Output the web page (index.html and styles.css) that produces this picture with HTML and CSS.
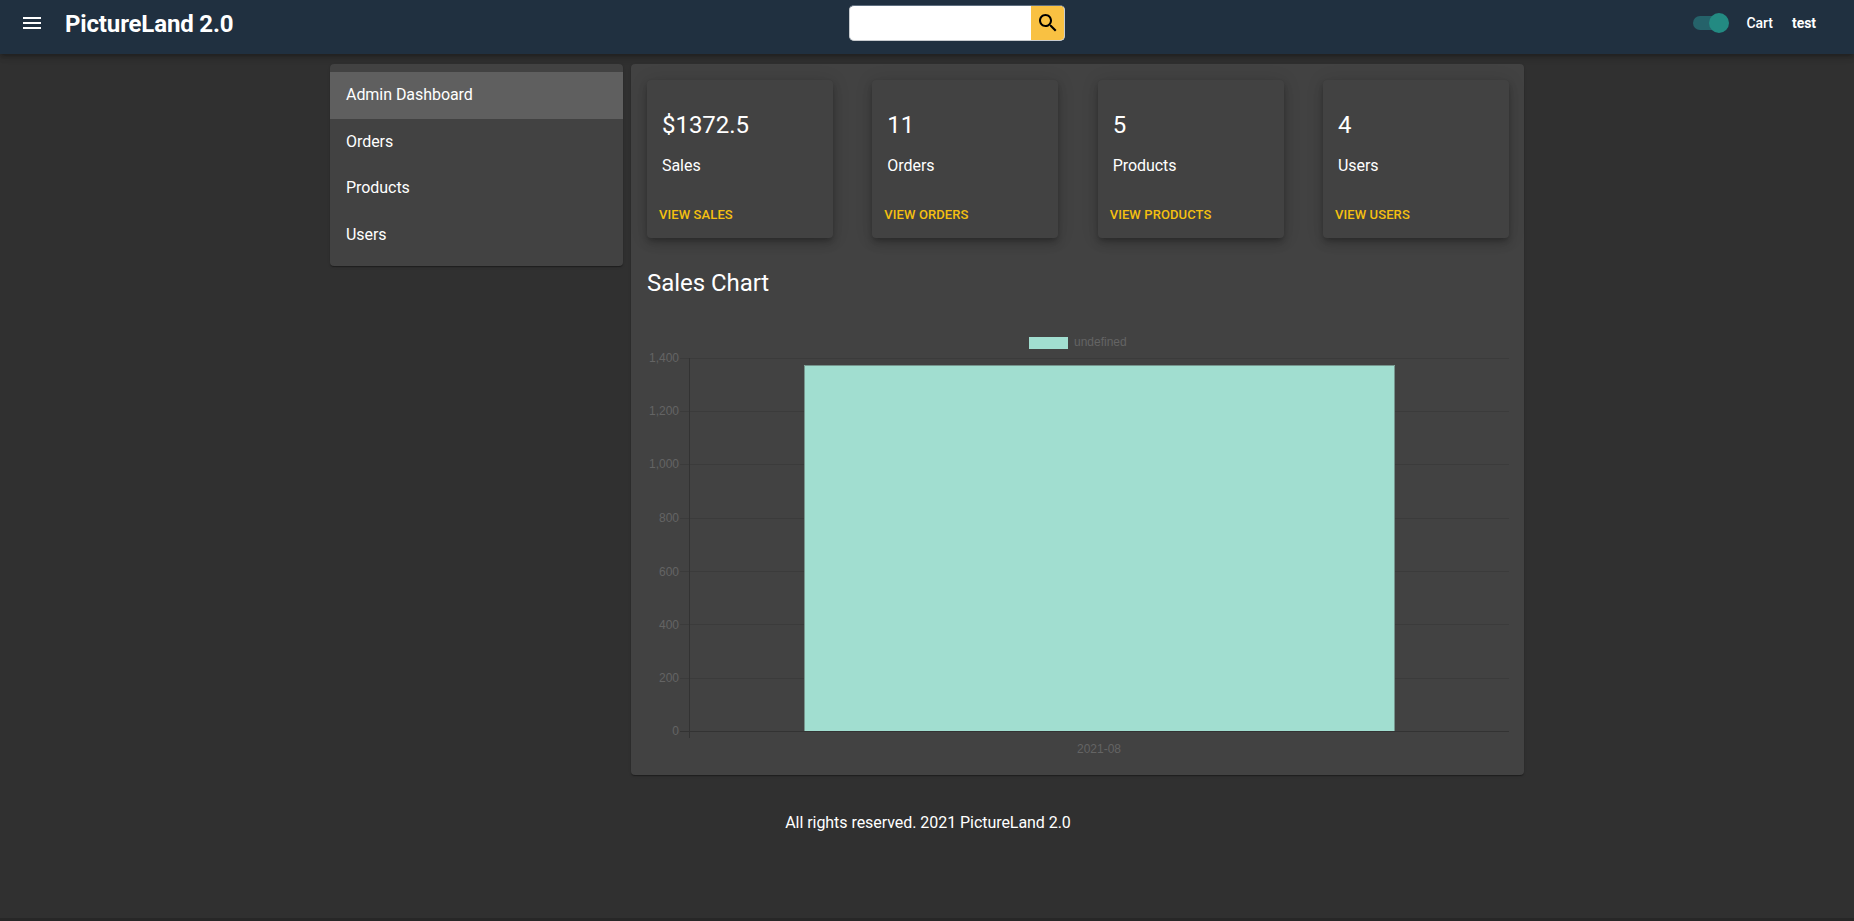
FILE: index.html
```html
<!DOCTYPE html>
<html lang="en">
<head>
    <meta charset="UTF-8">
    <title>PictureLand 2.0</title>
    <link rel="stylesheet" href="styles.css">
</head>
<body>
<header class="topbar">
    <div class="brand">
        <svg class="menu-icon" viewBox="0 0 24 24" width="24" height="24"><path d="M3 18h18v-2H3v2zm0-5h18v-2H3v2zm0-7v2h18V6H3z"/></svg>
        <a class="logo">PictureLand 2.0</a>
    </div>
    <form class="search">
        <div class="search-input"></div>
        <div class="search-btn">
            <svg viewBox="0 0 24 24" width="24" height="24"><path d="M15.5 14h-.79l-.28-.27C15.41 12.59 16 11.11 16 9.5 16 5.91 13.09 3 9.5 3S3 5.91 3 9.5 5.91 16 9.5 16c1.61 0 3.09-.59 4.23-1.57l.27.28v.79l5 4.99L20.49 19l-4.99-5zm-6 0C7.01 14 5 11.99 5 9.5S7.01 5 9.5 5 14 7.01 14 9.5 11.99 14 9.5 14z"/></svg>
        </div>
    </form>
    <div class="actions">
        <div class="switch"><span class="thumb"></span></div>
        <a class="cart">Cart</a>
        <a class="user">test</a>
    </div>
</header>

<div class="page">
    <nav class="paper sidebar">
        <ul>
            <li class="selected">Admin Dashboard</li>
            <li>Orders</li>
            <li>Products</li>
            <li>Users</li>
        </ul>
    </nav>

    <main class="paper dash">
        <div class="cards">
            <div class="card">
                <div class="card-value">$1372.5</div>
                <div class="card-label">Sales</div>
                <a class="card-link">View sales</a>
            </div>
            <div class="card">
                <div class="card-value">11</div>
                <div class="card-label">Orders</div>
                <a class="card-link">View orders</a>
            </div>
            <div class="card">
                <div class="card-value">5</div>
                <div class="card-label">Products</div>
                <a class="card-link">View products</a>
            </div>
            <div class="card">
                <div class="card-value">4</div>
                <div class="card-label">Users</div>
                <a class="card-link">View users</a>
            </div>
        </div>
        <h2 class="chart-title">Sales Chart</h2>
        <svg class="chart" viewBox="0 0 862 433" width="862" height="433">
            <rect class="bar" x="382" y="11" width="39" height="12"/>
            <text class="label" x="427" y="20">undefined</text>

            <path class="gridline" d="M33 32.500H862M33 85.500H862M33 138.500H862M33 192.500H862M33 245.500H862M33 298.500H862M33 352.500H862"/>
            <path class="axis" d="M33 405.500H862M42.500 32V412"/>

            <rect class="bar" x="157" y="39" width="591" height="366"/>
            <path class="bar-edge" d="M157.500 405V39.500H747.500V405"/>

            <text class="label tick" x="32" y="36">1,400</text>
            <text class="label tick" x="32" y="89">1,200</text>
            <text class="label tick" x="32" y="142">1,000</text>
            <text class="label tick" x="32" y="196">800</text>
            <text class="label tick" x="32" y="250">600</text>
            <text class="label tick" x="32" y="303">400</text>
            <text class="label tick" x="32" y="356">200</text>
            <text class="label tick" x="32" y="409">0</text>
            <text class="label xtick" x="452" y="427">2021-08</text>
        </svg>
    </main>
</div>
<footer class="footer">All rights reserved. 2021 PictureLand 2.0</footer>
</body>
</html>
```

FILE: styles.css
```css
*{
    margin:0;
    padding:0;
    box-sizing:border-box;
}
html{
    height:100%;
    background:#272727;
}
body{
    height:918px;
    background:#303030;
    color:#fff;
    font-family:Roboto,"Liberation Sans",sans-serif;
    font-size:16px;
    letter-spacing:-.05px;
    overflow:hidden;
}
li{
    list-style:none;
}

/* top bar */
.topbar{
    height:54px;
    background:#203040;
    display:flex;
    align-items:center;
    padding:0 38px 8px 20px;
    box-shadow:0 2px 4px -1px rgba(0,0,0,.2),0 4px 5px 0 rgba(0,0,0,.14),0 1px 10px 0 rgba(0,0,0,.12);
}
.brand{
    display:flex;
    align-items:center;
    gap:21px;
    width:829px;
}
.menu-icon{
    fill:#fff;
}
.logo{
    font-size:24px;
    font-weight:700;
    letter-spacing:-.15px;
    padding-top:2px;
}
.search{
    display:flex;
    width:216px;
    height:36px;
    background:#fff;
    border:1px solid #c8ccd0;
    border-top-color:#5f6f80;
    border-radius:5px;
    overflow:hidden;
}
.search-input{
    flex:1;
}
.search-btn{
    width:33px;
    background:#f9c142;
    display:flex;
    align-items:center;
    justify-content:center;
}
.actions{
    margin-left:auto;
    display:flex;
    align-items:center;
    font-size:14px;
}
.switch{
    width:33px;
    height:14px;
    border-radius:7px;
    background:#25626a;
    margin-right:21px;
    position:relative;
}
.thumb{
    position:absolute;
    right:-3px;
    top:-3px;
    width:20px;
    height:20px;
    border-radius:50%;
    background:#238a82;
}
.cart{
    font-weight:500;
    margin-right:19px;
}
.user{
    font-weight:700;
}

/* page */
.page{
    width:1194px;
    margin:10px auto 0;
    display:grid;
    grid-template-columns:293px 893px;
    gap:8px;
    align-items:start;
}
.paper{
    background:#424242;
    border-radius:4px;
    box-shadow:0 2px 1px -1px rgba(0,0,0,.2),0 1px 1px 0 rgba(0,0,0,.14),0 1px 3px 0 rgba(0,0,0,.12);
}
.sidebar{
    padding:8px 0;
}
.sidebar li{
    height:46.500px;
    line-height:46px;
    padding-left:16px;
}
.sidebar .selected{
    background:#5f5f5f;
}

.dash{
    padding:16px 15px 16px 16px;
}
.cards{
    display:grid;
    grid-template-columns:repeat(4,186px);
    justify-content:space-between;
}
.card{
    height:158px;
    padding:29px 15px 0;
    display:flex;
    flex-direction:column;
    background:#424242;
    border-radius:4px;
    box-shadow:0 3px 5px -1px rgba(0,0,0,.2),0 6px 10px 0 rgba(0,0,0,.14),0 1px 18px 0 rgba(0,0,0,.12);
}
.card-value{
    font-size:24px;
    line-height:32px;
}
.card-label{
    line-height:24px;
    margin-top:13px;
}
.card-link{
    margin:auto 0 12px -3px;
    font-size:13px;
    font-weight:500;
    line-height:22px;
    letter-spacing:.1px;
    text-transform:uppercase;
    color:#f5c010;
}
.chart-title{
    font-size:24px;
    font-weight:400;
    line-height:32px;
    margin-top:29px;
}
.chart{
    display:block;
    margin-top:27px;
}
.chart .bar{
    fill:#a1ded0;
}
.bar-edge{
    fill:none;
    stroke:#76958d;
}
.gridline{
    fill:none;
    stroke:#3b3b3b;
}
.axis{
    fill:none;
    stroke:#333;
}
.label{
    font-family:"Liberation Sans",Arial,sans-serif;
    font-size:12px;
    letter-spacing:0;
    fill:#646464;
}
.tick{
    text-anchor:end;
}
.xtick{
    text-anchor:middle;
}

.footer{
    margin-top:38px;
    padding-left:2px;
    text-align:center;
    line-height:20px;
}
```
